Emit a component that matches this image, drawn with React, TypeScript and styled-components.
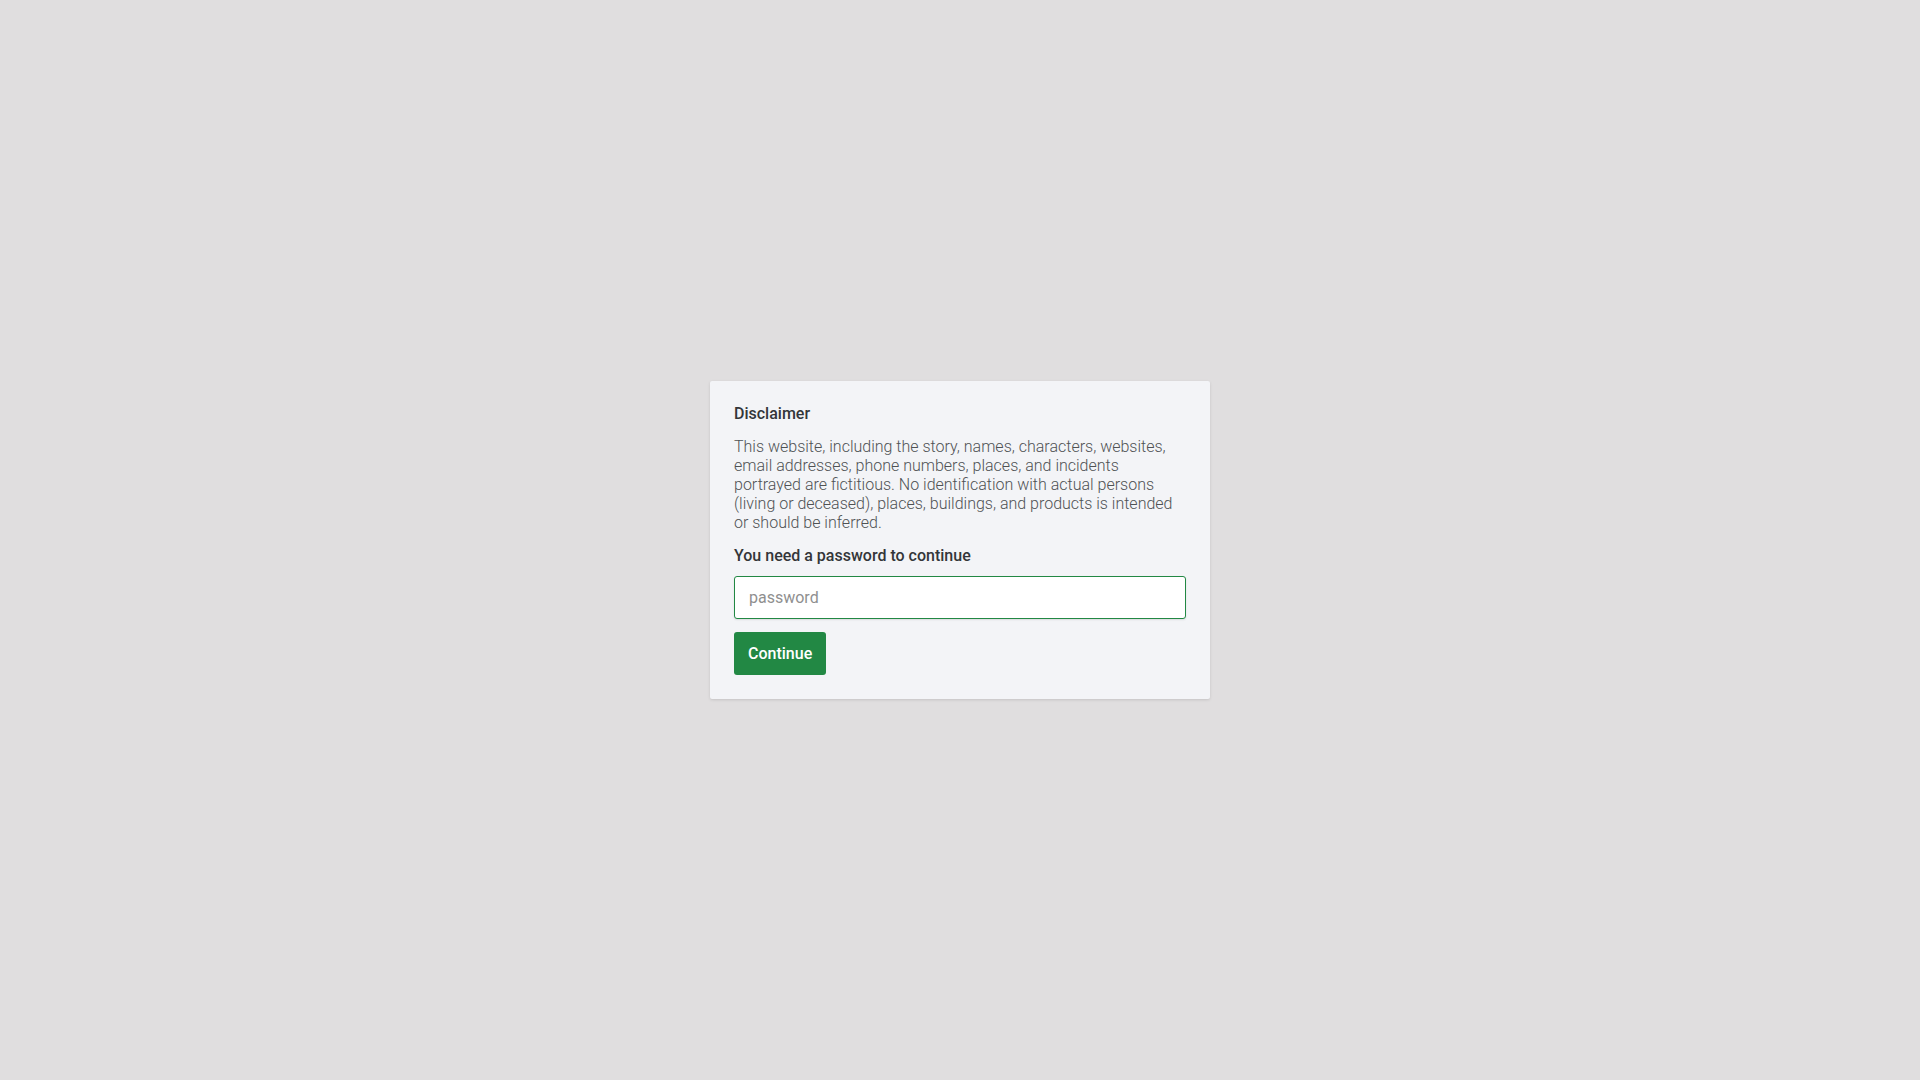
import { createGlobalStyle, styled } from "styled-components";

const GlobalStyle = createGlobalStyle`
  html, body {
    margin: 0;
    padding: 0;
    height: 100%;
  }
  body {
    background-color: #e0dedf;
    font-family: Roboto, "Liberation Sans", sans-serif;
  }
  #root {
    height: 100%;
  }
`;

export default function App() {
  return (
    <>
      <GlobalStyle />
      <Page>
        <Card>
          <Title>Disclaimer</Title>
          <Body>
            This website, including the story, names, characters, websites, email addresses, phone
            numbers, places, and incidents portrayed are fictitious. No identification with actual
            persons (living or deceased), places, buildings, and products is intended or should be
            inferred.
          </Body>
          <Form onSubmit={(e) => e.preventDefault()}>
            <Label htmlFor="password">You need a password to continue</Label>
            <PasswordInput id="password" type="password" placeholder="password" autoFocus />
            <ContinueButton type="submit">Continue</ContinueButton>
          </Form>
        </Card>
      </Page>
    </>
  );
}

const Page = styled.div`
  min-height: 100vh;
  display: flex;
  justify-content: center;
  align-items: center;
`;

const Card = styled.div`
  width: 500px;
  box-sizing: border-box;
  padding: 23px 24px 24px;
  background-color: #f3f4f7;
  border-radius: 2px;
  box-shadow: 0 1px 3px rgba(0, 0, 0, 0.12);
`;

const Title = styled.h2`
  margin: 0 0 14px;
  font-size: 16px;
  line-height: 19px;
  font-weight: 500;
  color: #333639;
`;

const Body = styled.p`
  margin: 0 0 14px;
  font-size: 16px;
  line-height: 19px;
  font-weight: 300;
  color: #4f5254;
`;

const Form = styled.form`
  display: flex;
  flex-direction: column;
  align-items: flex-start;
`;

const Label = styled.label`
  font-size: 16px;
  line-height: 19px;
  font-weight: 500;
  color: #333639;
  margin-bottom: 11px;
`;

const PasswordInput = styled.input`
  width: 100%;
  height: 43px;
  box-sizing: border-box;
  padding: 0 14px;
  font-family: Roboto, "Liberation Sans", sans-serif;
  font-size: 16px;
  color: #333;
  background: #ffffff;
  border: 1px solid #228844;
  border-radius: 3px;
  box-shadow: 0 1px 2px rgba(0, 0, 0, 0.1);
  outline: none;
  margin-bottom: 13px;

  &::placeholder {
    color: #8f8f8f;
  }
`;

const ContinueButton = styled.button`
  height: 43px;
  padding: 0 14px;
  font-family: Roboto, "Liberation Sans", sans-serif;
  font-size: 16px;
  font-weight: 500;
  color: #ffffff;
  background-color: #228844;
  border: none;
  border-radius: 3px;
  cursor: pointer;
`;
